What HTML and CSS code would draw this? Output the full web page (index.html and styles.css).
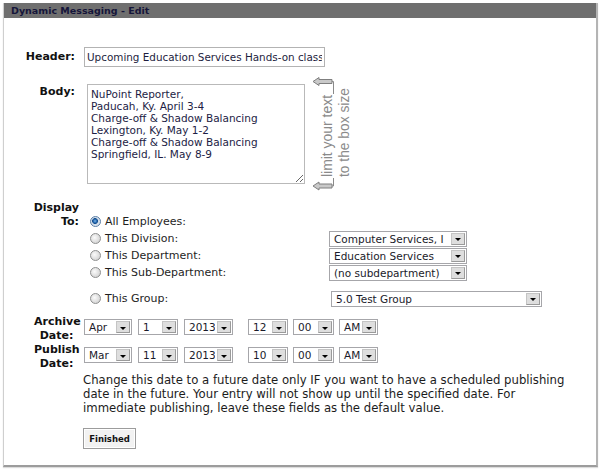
FILE: index.html
```html
<!DOCTYPE html>
<html lang="en">
<head>
    <meta charset="UTF-8">
    <title>Dynamic Messaging - Edit</title>
    <link rel="stylesheet" href="styles.css">
</head>
<body>
    <div class="panel">
        <div class="panel-title">Dynamic Messaging - Edit</div>
        <div class="panel-body">

            <div class="row row-header">
                <label class="label label-header" for="header">Header:</label>
                <input type="text" id="header" class="text-input" value="Upcoming Education Services Hands-on classes" spellcheck="false">
            </div>

            <div class="row row-body">
                <label class="label label-body" for="body">Body:</label>
                <textarea id="body" class="body-input" spellcheck="false">NuPoint Reporter,
Paducah, Ky. April 3-4
Charge-off &amp; Shadow Balancing
Lexington, Ky. May 1-2
Charge-off &amp; Shadow Balancing
Springfield, IL. May 8-9</textarea>
                <svg class="hint" width="42" height="114" viewBox="0 0 42 114">
                    <polygon points="2,4.5 8,0.5 8,2.5 21,2.5 21,6.5 8,6.5 8,8.5" fill="#c9c9c9" stroke="#7f7f7f" stroke-width="1"/>
                    <path d="M21 4.5 H22.5 V17" fill="none" stroke="#8a8a8a" stroke-width="1"/>
                    <text transform="translate(21,100) rotate(-90)" textLength="82" lengthAdjust="spacingAndGlyphs" class="hint-text">limit your text</text>
                    <text transform="translate(38,100) rotate(-90)" textLength="89" lengthAdjust="spacingAndGlyphs" class="hint-text">to the box size</text>
                    <path d="M22.5 101 V109 H21" fill="none" stroke="#8a8a8a" stroke-width="1"/>
                    <polygon points="2,109 8,105 8,107 21,107 21,111 8,111 8,113" fill="#c9c9c9" stroke="#7f7f7f" stroke-width="1"/>
                </svg>
            </div>

            <div class="row row-display">
                <div class="label label-display">Display<br>To:</div>
                <div class="options">
                    <div class="option-row">
                        <span class="option"><span class="radio on"></span>All Employees:</span>
                    </div>
                    <div class="option-row">
                        <span class="option"><span class="radio"></span>This Division:</span>
                        <div class="select select-wide"><span class="value">Computer Services, I</span><span class="arrow"></span></div>
                    </div>
                    <div class="option-row">
                        <span class="option"><span class="radio"></span>This Department:</span>
                        <div class="select select-wide"><span class="value">Education Services</span><span class="arrow"></span></div>
                    </div>
                    <div class="option-row">
                        <span class="option"><span class="radio"></span>This Sub-Department:</span>
                        <div class="select select-wide"><span class="value">(no subdepartment)</span><span class="arrow"></span></div>
                    </div>
                    <div class="option-row group-row">
                        <span class="option"><span class="radio"></span>This Group:</span>
                        <div class="select select-group"><span class="value">5.0 Test Group</span><span class="arrow"></span></div>
                    </div>
                </div>
            </div>

            <div class="row row-date row-archive">
                <div class="label label-date">Archive<br>Date:</div>
                <div class="date-fields">
                    <div class="select s-month"><span class="value">Apr</span><span class="arrow"></span></div>
                    <div class="select s-day"><span class="value">1</span><span class="arrow"></span></div>
                    <div class="select s-year"><span class="value">2013</span><span class="arrow"></span></div>
                    <div class="time-fields">
                        <div class="select s-hour"><span class="value">12</span><span class="arrow"></span></div>
                        <div class="select s-min"><span class="value">00</span><span class="arrow"></span></div>
                        <div class="select s-ampm"><span class="value">AM</span><span class="arrow"></span></div>
                    </div>
                </div>
            </div>

            <div class="row row-date">
                <div class="label label-date">Publish<br>Date:</div>
                <div class="date-fields">
                    <div class="select s-month"><span class="value">Mar</span><span class="arrow"></span></div>
                    <div class="select s-day"><span class="value">11</span><span class="arrow"></span></div>
                    <div class="select s-year"><span class="value">2013</span><span class="arrow"></span></div>
                    <div class="time-fields">
                        <div class="select s-hour"><span class="value">10</span><span class="arrow"></span></div>
                        <div class="select s-min"><span class="value">00</span><span class="arrow"></span></div>
                        <div class="select s-ampm"><span class="value">AM</span><span class="arrow"></span></div>
                    </div>
                </div>
            </div>

            <p class="note">Change this date to a future date only IF you want to have a scheduled publishing date in the future. Your entry will not show up until the specified date. For immediate publishing, leave these fields as the default value.</p>

            <button class="finish-btn">Finished</button>
        </div>
    </div>
</body>
</html>
```

FILE: styles.css
```css
* {
    margin: 0;
    padding: 0;
    box-sizing: border-box;
}
body {
    width: 600px;
    height: 470px;
    background-color: white;
    font-family: "DejaVu Sans", Verdana, sans-serif;
    color: #151515;
    overflow: hidden;
}
.panel {
    margin: 3px 2px 0 3px;
    height: 464px;
    border-left: 1px solid #cfcfcf;
    border-right: 2px solid #b4b4b4;
    border-bottom: 2px solid #9c9c9c;
    box-shadow: 0 1px 1px #dcdcdc;
}
.panel-title {
    height: 15px;
    background: #6f6f6f;
    color: #15153a;
    font-weight: 700;
    font-size: 9.5px;
    line-height: 15px;
    padding-left: 7px;
}
.panel-body {
    padding-top: 29px;
}
.row {
    display: flex;
    align-items: flex-start;
}
.label {
    width: 75px;
    flex: none;
    text-align: right;
    font-weight: 700;
    font-size: 11px;
    line-height: 14px;
    color: #111;
}
.label-header,
.label-body {
    padding-right: 4px;
}
.row-header {
    align-items: center;
}
.text-input {
    margin-left: 5px;
    width: 241px;
    height: 20px;
    border: 1px solid #b3b3b3;
    padding: 0 2px;
    font-family: "DejaVu Sans", Verdana, sans-serif;
    font-size: 10.4px;
    color: #1d1d40;
    outline: none;
}
.row-body {
    margin-top: 17px;
    align-items: center;
}
.row-body .label {
    align-self: flex-start;
    margin-top: 1px;
}
.body-input {
    margin-left: 8px;
    width: 218px;
    height: 100px;
    border: 1px solid #b9b9b9;
    padding: 3px 3px;
    font-family: "DejaVu Sans", Verdana, sans-serif;
    font-size: 10.5px;
    line-height: 12px;
    color: #1d1d45;
    outline: none;
    overflow: hidden;
}
.hint {
    margin: -7px 0 -7px 6px;
    flex: none;
}
.hint-text {
    font-family: "Liberation Sans", Arial, sans-serif;
    font-size: 14px;
    fill: #8a8a8a;
}
.row-display {
    margin-top: 17px;
}
.label-display {
    padding-right: 0;
}
.options {
    margin-top: 12px;
    font-size: 11px;
    color: #1e1e1e;
}
.option-row {
    display: flex;
    align-items: center;
    height: 17px;
}
.group-row {
    margin-top: 9px;
}
.option {
    width: 250px;
    flex: none;
    display: flex;
    align-items: center;
    white-space: nowrap;
}
.radio {
    width: 11px;
    height: 11px;
    margin: 0 4px 0 11px;
    border-radius: 50%;
    border: 1px solid #8e8f8f;
    background: radial-gradient(circle at 40% 40%, #fbfbfb 0, #e4e4e4 45%, #c9c9c9 100%);
}
.radio.on {
    border-color: #5a7ea6;
    background: radial-gradient(circle at 45% 45%, #7fb6e6 0, #2a6db3 1.6px, #174f8e 2.6px, #cfdbe8 3.2px, #eef1f4 100%);
}
.select {
    display: flex;
    align-items: center;
    height: 16px;
    border: 1px solid #a6a6aa;
    background: #fff;
    font-size: 10.5px;
    color: #1a1a2a;
    flex: none;
}
.select .value {
    flex: 1;
    padding-left: 4px;
    white-space: nowrap;
    overflow: hidden;
    line-height: 14px;
}
.select .arrow {
    width: 14px;
    height: 12px;
    margin: 0 1px 0 2px;
    flex: none;
    background: #dedede;
    border: 1px solid #9a9a9a;
    border-top-color: #c4c4c4;
    border-left-color: #c4c4c4;
    display: flex;
    align-items: center;
    justify-content: center;
}
.select .arrow::after {
    content: "";
    margin-top: 2px;
    border-left: 3px solid transparent;
    border-right: 3px solid transparent;
    border-top: 3px solid #000;
}
.select-wide {
    width: 138px;
}
.select-group {
    width: 211px;
    margin-left: 2px;
}
.label-date {
    padding-left: 30px;
    text-align: center;
}
.row-archive {
    margin-top: 8px;
}
.date-fields {
    display: flex;
    gap: 6px;
    margin: 4px 0 0 5px;
}
.time-fields {
    display: flex;
    gap: 5px;
    margin-left: 9px;
}
.s-month { width: 48px; }
.s-day { width: 40px; }
.s-year { width: 49px; }
.s-hour { width: 40px; }
.s-min { width: 41px; }
.s-ampm { width: 39px; }
.note {
    margin: 2px 0 0 79px;
    width: 484px;
    font-size: 11.7px;
    line-height: 14px;
    color: #1c1c1c;
}
.finish-btn {
    margin: 13px 0 0 79px;
    width: 53px;
    height: 21px;
    border: 1px solid #9c9c9c;
    box-shadow: inset 0 0 0 1px #fff;
    background: #f2f2f2;
    font-family: "DejaVu Sans", Verdana, sans-serif;
    font-weight: 700;
    font-size: 8.5px;
    color: #111;
    cursor: pointer;
}
```
